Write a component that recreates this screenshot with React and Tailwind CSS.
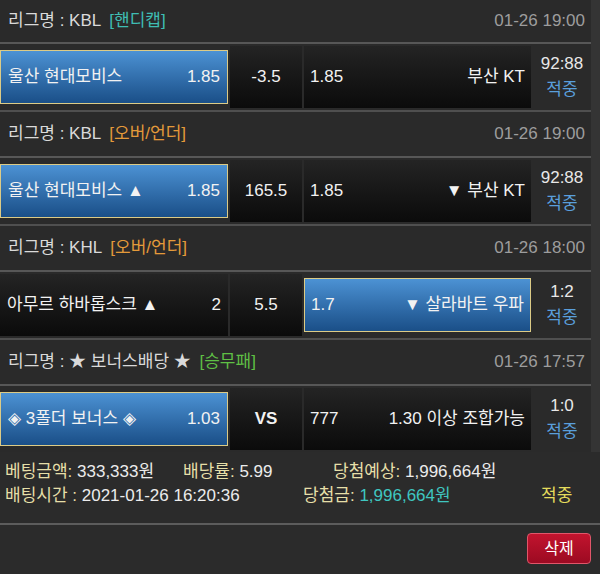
import React from 'react';

const FONT = { fontFamily: '"Liberation Sans", "Noto Sans CJK KR", sans-serif' };

const bets = [
    {
        league: 'KBL', type: '[핸디캡]', typeClass: 'text-[#3fbdb3]', time: '01-26 19:00',
        home: '울산 현대모비스', homeOdds: '1.85', mid: '-3.5', awayOdds: '1.85', away: '부산 KT',
        pick: 'home', score: '92:88', first: true,
    },
    {
        league: 'KBL', type: '[오버/언더]', typeClass: 'text-[#e49a3a]', time: '01-26 19:00',
        home: '울산 현대모비스 ▲', homeOdds: '1.85', mid: '165.5', awayOdds: '1.85', away: '▼ 부산 KT',
        pick: 'home', score: '92:88',
    },
    {
        league: 'KHL', type: '[오버/언더]', typeClass: 'text-[#e49a3a]', time: '01-26 18:00',
        home: '아무르 하바롭스크 ▲', homeOdds: '2', mid: '5.5', awayOdds: '1.7', away: '▼ 살라바트 우파',
        pick: 'away', score: '1:2',
    },
    {
        league: '★ 보너스배당 ★', type: '[승무패]', typeClass: 'text-[#5fbf45]', time: '01-26 17:57',
        home: '◈ 3폴더 보너스 ◈', homeOdds: '1.03', mid: 'VS', awayOdds: '777', away: '1.30 이상 조합가능',
        pick: 'home', score: '1:0', last: true,
    },
];

const darkCell = 'bg-gradient-to-b from-[#242424] to-[#0b0b0b]';
const blueCell = 'my-[4px] bg-gradient-to-b from-[#4c92d4] to-[#1a4f88] border-[1.5px] border-[#dccb86]';

const BetSection = ({ bet }) => (
    <div>
        <div className={`${bet.first ? 'h-[42px]' : 'h-[44px]'} flex items-center justify-between pl-[8px] pr-[6px]`}>
            <div className="text-[#dadada]">
                리그명 : {bet.league} <span className={`ml-[4px] ${bet.typeClass}`}>{bet.type}</span>
            </div>
            <div className="text-[#9d9d9d]">{bet.time}</div>
        </div>
        <div className="h-[2px] bg-[#575757]" />
        <div className="h-[66px] flex py-[2px] gap-[2px]">
            <div className={`w-[228px] flex items-center justify-between pl-[7px] pr-[7px] text-[#f2f2f2] ${bet.pick === 'home' ? blueCell : darkCell}`}>
                <span>{bet.home}</span>
                <span>{bet.homeOdds}</span>
            </div>
            <div className={`w-[72px] flex items-center justify-center text-[#f2f2f2] ${darkCell} ${bet.mid === 'VS' ? 'font-bold' : ''}`}>
                {bet.mid}
            </div>
            <div className={`w-[227px] flex items-center justify-between pl-[6px] pr-[6px] text-[#f2f2f2] ${bet.pick === 'away' ? blueCell : darkCell}`}>
                <span>{bet.awayOdds}</span>
                <span>{bet.away}</span>
            </div>
            <div className="flex-1 flex flex-col items-center justify-center leading-[26px]">
                <span className="text-[#e8e8e8]">{bet.score}</span>
                <span className="text-[#5a9fdc]">적중</span>
            </div>
        </div>
        {!bet.last && <div className="h-[2px] bg-[#4f4f4f]" />}
    </div>
);

export default function App() {
    return (
        <div className="w-[600px] h-[574px] bg-[#2b2b2b] text-[17px] overflow-hidden" style={FONT}>
            <div className="flex">
                <div className="w-[591px] bg-[#2a2a2a]">
                    {bets.map((bet, i) => <BetSection key={i} bet={bet} />)}
                </div>
                <div className="flex-1 bg-[#343434]" />
            </div>
            <div className="pt-[8px] pb-[15px] pl-[5px] leading-[24px]">
                <div className="flex">
                    <div className="w-[178px]"><span className="text-[#e6dfa8]">베팅금액:</span> <span className="text-[#ececec]">333,333원</span></div>
                    <div className="w-[150px]"><span className="text-[#e6dfa8]">배당률:</span> <span className="text-[#ececec]">5.99</span></div>
                    <div><span className="text-[#e6dfa8]">당첨예상:</span> <span className="text-[#ececec]">1,996,664원</span></div>
                </div>
                <div className="flex">
                    <div className="w-[298px]"><span className="text-[#e6dfa8]">배팅시간 :</span> <span className="text-[#ececec]">2021-01-26 16:20:36</span></div>
                    <div className="w-[238px]"><span className="text-[#e6dfa8]">당첨금:</span> <span className="text-[#3fc6c0]">1,996,664원</span></div>
                    <div className="text-[#e4dc5c]">적중</div>
                </div>
            </div>
            <div className="h-[2px] bg-[#5c5c5c]" />
            <div className="flex justify-end pt-[8px] pr-[9px]">
                <button className="w-[64px] h-[31px] rounded-[4px] bg-gradient-to-b from-[#c2142e] to-[#9c0a22] border border-[#e0566a] text-white text-[16px]">
                    삭제
                </button>
            </div>
        </div>
    );
}
